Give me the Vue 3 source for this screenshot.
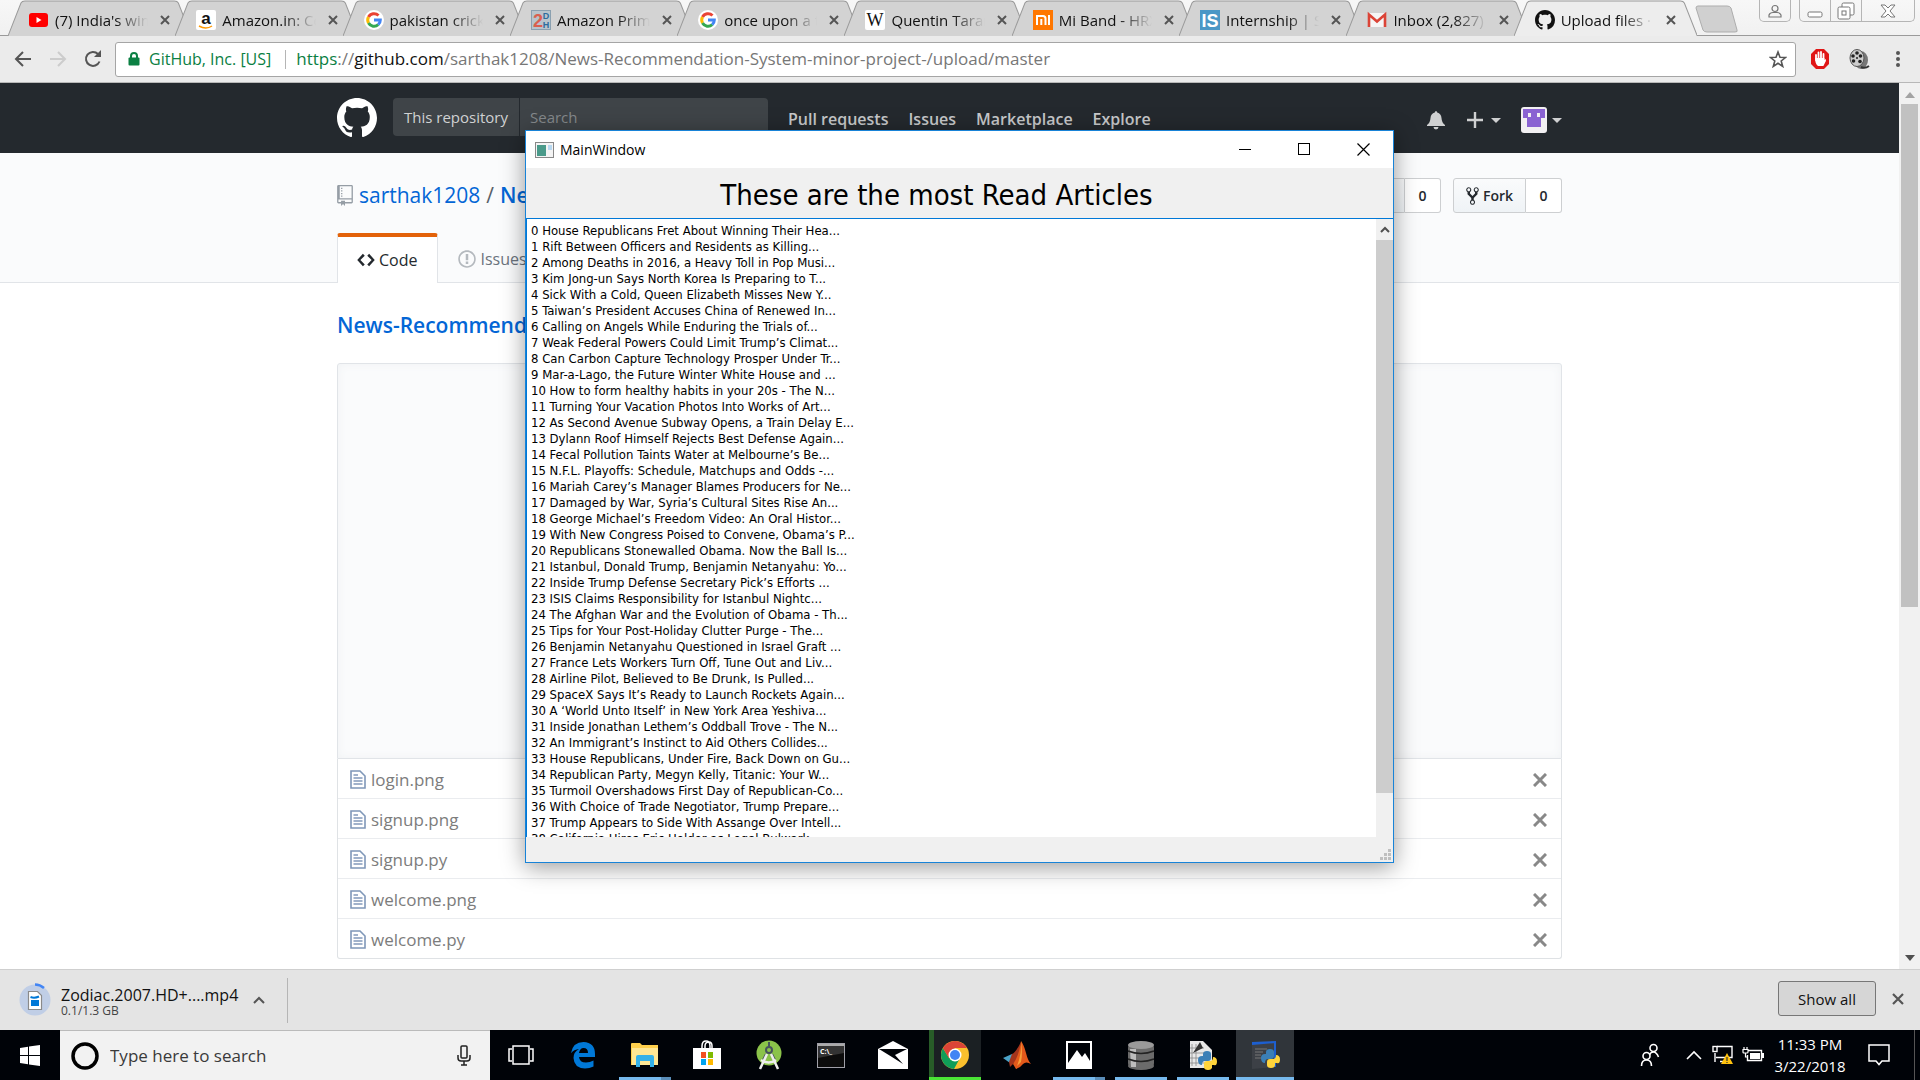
<script setup>
const tabs = [
  { icon: 'youtube', title: "(7) India's wins" },
  { icon: 'amazon', title: 'Amazon.in: Co' },
  { icon: 'google', title: 'pakistan cricke' },
  { icon: 'twodh', title: 'Amazon Prime' },
  { icon: 'google', title: 'once upon a t' },
  { icon: 'wiki', title: 'Quentin Taran' },
  { icon: 'mi', title: 'Mi Band - HRX' },
  { icon: 'is', title: 'Internship | Su' },
  { icon: 'gmail', title: 'Inbox (2,827) -' },
  { icon: 'github', title: 'Upload files · s', active: true },
]
const navLinks = ['Pull requests', 'Issues', 'Marketplace', 'Explore']
const files = ['login.png', 'signup.png', 'signup.py', 'welcome.png', 'welcome.py']
const articles = [
  'House Republicans Fret About Winning Their Hea...',
  'Rift Between Officers and Residents as Killing...',
  'Among Deaths in 2016, a Heavy Toll in Pop Musi...',
  'Kim Jong-un Says North Korea Is Preparing to T...',
  'Sick With a Cold, Queen Elizabeth Misses New Y...',
  'Taiwan’s President Accuses China of Renewed In...',
  'Calling on Angels While Enduring the Trials of...',
  'Weak Federal Powers Could Limit Trump’s Climat...',
  'Can Carbon Capture Technology Prosper Under Tr...',
  'Mar-a-Lago, the Future Winter White House and ...',
  'How to form healthy habits in your 20s - The N...',
  'Turning Your Vacation Photos Into Works of Art...',
  'As Second Avenue Subway Opens, a Train Delay E...',
  'Dylann Roof Himself Rejects Best Defense Again...',
  'Fecal Pollution Taints Water at Melbourne’s Be...',
  'N.F.L. Playoffs: Schedule, Matchups and Odds -...',
  'Mariah Carey’s Manager Blames Producers for Ne...',
  'Damaged by War, Syria’s Cultural Sites Rise An...',
  'George Michael’s Freedom Video: An Oral Histor...',
  'With New Congress Poised to Convene, Obama’s P...',
  'Republicans Stonewalled Obama. Now the Ball Is...',
  'Istanbul, Donald Trump, Benjamin Netanyahu: Yo...',
  'Inside Trump Defense Secretary Pick’s Efforts ...',
  'ISIS Claims Responsibility for Istanbul Nightc...',
  'The Afghan War and the Evolution of Obama - Th...',
  'Tips for Your Post-Holiday Clutter Purge - The...',
  'Benjamin Netanyahu Questioned in Israel Graft ...',
  'France Lets Workers Turn Off, Tune Out and Liv...',
  'Airline Pilot, Believed to Be Drunk, Is Pulled...',
  'SpaceX Says It’s Ready to Launch Rockets Again...',
  'A ‘World Unto Itself’ in New York Area Yeshiva...',
  'Inside Jonathan Lethem’s Oddball Trove - The N...',
  'An Immigrant’s Instinct to Aid Others Collides...',
  'House Republicans, Under Fire, Back Down on Gu...',
  'Republican Party, Megyn Kelly, Titanic: Your W...',
  'Turmoil Overshadows First Day of Republican-Co...',
  'With Choice of Trade Negotiator, Trump Prepare...',
  'Trump Appears to Side With Assange Over Intell...',
  'California Hires Eric Holder as Legal Bulwark ...',
]
const apps = [
  { id: 'taskview', label: 'Task View' },
  { id: 'edge', label: 'Microsoft Edge' },
  { id: 'explorer', label: 'File Explorer', open: true, stacked: true },
  { id: 'store', label: 'Store' },
  { id: 'android', label: 'Android Studio' },
  { id: 'cmd', label: 'Command Prompt' },
  { id: 'mail', label: 'Mail' },
  { id: 'chrome', label: 'Google Chrome', open: true },
  { id: 'matlab', label: 'MATLAB' },
  { id: 'photos', label: 'Photos', open: true, stacked: true },
  { id: 'db', label: 'Database', open: true },
  { id: 'idle', label: 'Python IDLE', open: true },
  { id: 'python', label: 'Python', open: true },
]
const octocat =
  'M8 0C3.58 0 0 3.58 0 8c0 3.54 2.29 6.53 5.47 7.59.4.07.55-.17.55-.38 0-.19-.01-.82-.01-1.49-2.01.37-2.53-.49-2.69-.94-.09-.23-.48-.94-.82-1.13-.28-.15-.68-.52-.01-.53.63-.01 1.08.58 1.23.82.72 1.21 1.87.87 2.33.66.07-.52.28-.87.51-1.07-1.78-.2-3.64-.89-3.64-3.95 0-.87.31-1.59.82-2.15-.08-.2-.36-1.02.08-2.12 0 0 .67-.21 2.2.82.64-.18 1.32-.27 2-.27.68 0 1.36.09 2 .27 1.53-1.04 2.2-.82 2.2-.82.44 1.1.16 1.92.08 2.12.51.56.82 1.27.82 2.15 0 3.07-1.87 3.75-3.65 3.95.29.25.54.73.54 1.48 0 1.07-.01 1.93-.01 2.2 0 .21.15.46.55.38A8.013 8.013 0 0016 8c0-4.42-3.58-8-8-8z'
</script>

<template>
  <div class="desktop">
    <header class="tabstrip">
      <div class="tabs">
        <div v-for="(tab, i) in tabs" :key="i" class="tab" :class="{ active: tab.active }">
          <svg class="tab-shape" viewBox="0 0 184 36" preserveAspectRatio="none" aria-hidden="true">
            <path d="M0 36L13 3Q14 1 17 1H167Q170 1 171 3L184 36" vector-effect="non-scaling-stroke" />
          </svg>
          <svg class="favicon" viewBox="0 0 20 20" aria-hidden="true">
            <g v-if="tab.icon === 'youtube'">
              <rect x="0" y="3" width="19" height="14" rx="3" fill="#f00" />
              <path d="M7.500 7v6l5-3z" fill="#fff" />
            </g>
            <g v-else-if="tab.icon === 'amazon'">
              <rect width="20" height="20" rx="2" fill="#fff" />
              <text x="10" y="14" text-anchor="middle" font-size="17" font-weight="700" fill="#111">a</text>
              <path d="M3 16q7 4 13 0" fill="none" stroke="#f90" stroke-width="1.500" />
            </g>
            <g v-else-if="tab.icon === 'google'">
              <circle cx="10" cy="10" r="10" fill="#fff" />
              <g fill="none" stroke-width="3">
                <path d="M14.500 5.500A6.300 6.300 0 0 0 4.500 7" stroke="#ea4335" />
                <path d="M4.500 7A6.300 6.300 0 0 0 4.500 13" stroke="#fbbc05" />
                <path d="M4.500 13A6.300 6.300 0 0 0 14.200 14.700" stroke="#34a853" />
                <path d="M14.200 14.700A6.300 6.300 0 0 0 16.300 10H10" stroke="#4285f4" />
              </g>
            </g>
            <g v-else-if="tab.icon === 'twodh'">
              <rect x=".5" y=".5" width="19" height="19" fill="#b9c4cc" stroke="#8aa0b0" />
              <text x="7" y="17" text-anchor="middle" font-size="18" font-weight="700" fill="#d9604f">2</text>
              <text x="15" y="9" text-anchor="middle" font-size="9" font-weight="700" fill="#2f6c9c">D</text>
              <text x="15" y="18" text-anchor="middle" font-size="9" font-weight="700" fill="#2f6c9c">H</text>
            </g>
            <g v-else-if="tab.icon === 'wiki'">
              <rect width="20" height="20" rx="2" fill="#fff" />
              <text class="serif" x="10" y="16" text-anchor="middle" font-size="18" fill="#111">W</text>
            </g>
            <g v-else-if="tab.icon === 'mi'">
              <rect width="20" height="20" fill="#f70" />
              <path d="M4 15V6h6q2.500 0 2.500 2.500V15M8.300 9v6M16 5v10" fill="none" stroke="#fff" stroke-width="2" />
            </g>
            <g v-else-if="tab.icon === 'is'">
              <rect width="20" height="20" fill="#4a97c6" />
              <text x="10" y="17" text-anchor="middle" font-size="18" font-weight="700" fill="#fff">IS</text>
            </g>
            <g v-else-if="tab.icon === 'gmail'">
              <rect x="1" y="3" width="18" height="14" rx="1" fill="#f6f6f6" />
              <path d="M2 17V4.500l8 7 8-7V17" fill="none" stroke="#db4437" stroke-width="2.600" />
            </g>
            <g v-else>
              <path :d="octocat" transform="scale(1.25)" fill="#111" />
            </g>
          </svg>
          <span class="tab-title">{{ tab.title }}</span>
          <button class="tab-close" aria-label="Close tab">
            <svg width="10" height="10" viewBox="0 0 10 10"><path d="M1 1l8 8M9 1L1 9" stroke="#555" stroke-width="2" /></svg>
          </button>
        </div>
      </div>
      <button class="newtab" aria-label="New tab">
        <svg width="44" height="28" viewBox="0 0 44 28"><path d="M3 1H32Q35 1 36 3L42 25Q43 27 40 27H12Q9 27 8 25L1 3Q1 1 3 1Z" fill="#d0d0d0" stroke="#adadad" /></svg>
      </button>
      <button class="profile" aria-label="Profile">
        <svg width="14" height="14" viewBox="0 0 14 14"><g fill="none" stroke="#777" stroke-width="1.200"><circle cx="7" cy="4.500" r="3" /><path d="M1 13V11Q2 8.500 5 8.500H9Q12 8.500 13 11V13Z" /></g></svg>
      </button>
      <div class="wincontrols">
        <button aria-label="Minimize"><svg width="16" height="14" viewBox="0 0 16 14"><rect x="1" y="8" width="14" height="5" rx="1.500" fill="#fff" stroke="#777" /></svg></button>
        <button aria-label="Restore"><svg width="18" height="18" viewBox="0 0 18 18"><g fill="#fff" stroke="#777"><rect x="5" y="1" width="12" height="12" rx="1.500" /><rect x="1" y="5" width="12" height="12" rx="1.500" /><rect x="5" y="9" width="4" height="4" /></g></svg></button>
        <button class="wide" aria-label="Close"><svg width="16" height="14" viewBox="0 0 16 14"><path d="M1 1h4l3 3 3-3h4l-5 6 5 6h-4l-3-3-3 3H1l5-6z" fill="#fff" stroke="#777" /></svg></button>
      </div>
    </header>

    <nav class="toolbar">
      <button aria-label="Back"><svg width="18" height="16" viewBox="0 0 18 16"><path d="M17 8H2M9 1L2 8l7 7" fill="none" stroke="#555" stroke-width="2" /></svg></button>
      <button aria-label="Forward"><svg width="18" height="16" viewBox="0 0 18 16"><path d="M1 8h15M9 1l7 7-7 7" fill="none" stroke="#ccc" stroke-width="2" /></svg></button>
      <button aria-label="Reload"><svg width="18" height="18" viewBox="0 0 18 18"><path d="M15.500 11.500A7 7 0 1 1 14 4" fill="none" stroke="#555" stroke-width="2" /><path d="M17 0v7h-7z" fill="#555" /></svg></button>
      <div class="omnibox">
        <svg width="12" height="14" viewBox="0 0 12 14" aria-hidden="true"><path d="M3 6V4a3 3 0 0 1 6 0v2" fill="none" stroke="#0b8043" stroke-width="2" /><rect x="0.500" y="5.500" width="11" height="8" rx="1" fill="#0b8043" /></svg>
        <span class="cert">GitHub, Inc. [US]</span>
        <span class="url"><span class="secure">https</span>://<b>github.com</b>/sarthak1208/News-Recommendation-System-minor-project-/upload/master</span>
        <button class="star" aria-label="Bookmark"><svg width="18" height="18" viewBox="0 0 18 18"><path d="M9 2l2 5.200 5.500.3-4.300 3.500 1.500 5.400L9 13.300l-4.700 3.100L5.800 11 1.500 7.500 7 7.200z" fill="none" stroke="#555" stroke-width="1.600" /></svg></button>
      </div>
      <button aria-label="AdBlock"><svg width="20" height="20" viewBox="0 0 20 20"><path d="M6 0h8l5 5v10l-5 5H6l-5-5V5z" fill="#e01616" /><path d="M6 11V6M8.500 10V3.500M11 10V3M13.500 11V5" stroke="#fff" stroke-width="1.800" stroke-linecap="round" /><path d="M5.200 9h9.200v2l1.500-1v2l-2.500 5H8q-3-2-2.800-8z" fill="#fff" /></svg></button>
      <button aria-label="Film extension"><svg width="24" height="20" viewBox="-1 0 24 20"><ellipse cx="13" cy="11" rx="7" ry="9" fill="#777" /><path d="M13 18q4 2 8-1" stroke="#333" stroke-width="2" fill="none" /><ellipse cx="9" cy="9" rx="7" ry="8.500" fill="#ccc" stroke="#555" /><g fill="#222"><circle cx="9" cy="4" r="1.800" /><circle cx="5" cy="7" r="1.800" /><circle cx="12.500" cy="7" r="1.800" /><circle cx="5.500" cy="12" r="1.800" /><circle cx="12" cy="12.500" r="1.800" /><circle cx="9" cy="9" r="1" /></g></svg></button>
      <button class="menu" aria-label="Menu"><svg width="4" height="18" viewBox="0 0 4 18"><g fill="#555"><circle cx="2" cy="3" r="2" /><circle cx="2" cy="9" r="2" /><circle cx="2" cy="15" r="2" /></g></svg></button>
    </nav>

    <div class="viewport">
      <div class="page">
        <header class="gh-header">
          <div class="container gh-bar">
            <svg class="gh-logo" viewBox="0 0 16 16" aria-label="GitHub"><path :d="octocat" fill="#fff" /></svg>
            <form class="gh-search">
              <label for="q">This repository</label>
              <input id="q" type="text" placeholder="Search" />
            </form>
            <nav class="gh-nav"><a v-for="l in navLinks" :key="l" href="#">{{ l }}</a></nav>
            <div class="gh-user">
              <svg width="18" height="20" viewBox="0 0 18 20"><path d="M9 1q1 0 1.200 1.500 4 1 4.300 5.500.3 5 3.500 7v1H0v-1q3.200-2 3.500-7Q3.800 3.500 7.800 2.500 8 1 9 1zM6.500 17h5a2.500 2.500 0 0 1-5 0z" fill="#cfd0d1" /></svg>
              <span class="drop"><svg width="16" height="16" viewBox="0 0 16 16"><path d="M8 0v16M0 8h16" stroke="#cfd0d1" stroke-width="2.400" /></svg><i class="caret"></i></span>
              <span class="drop near"><svg width="26" height="26" viewBox="0 0 26 26"><rect width="26" height="26" rx="3" fill="#f2f0f2" /><path d="M2 2h22v9h-4v9H6v-9H2z" fill="#8a63d2" /><path d="M7 6h3v4H7zM16 6h3v4h-3z" fill="#f2f0f2" /></svg><i class="caret"></i></span>
            </div>
          </div>
        </header>
        <section class="pagehead">
          <div class="container">
            <div class="repo-row">
              <h1>
                <svg width="16" height="21" viewBox="0 0 12 16"><path fill="#959da5" d="M4 9H3V8h1v1zm0-3H3v1h1V6zm0-2H3v1h1V4zm0-2H3v1h1V2zm8-1v12c0 .55-.45 1-1 1H6v2l-1.500-1.500L3 16v-2H1c-.55 0-1-.45-1-1V1c0-.55.45-1 1-1h10c.55 0 1 .45 1 1zm-1 10H1v2h2v-1h3v1h5v-2zm0-10H2v9h9V1z" /></svg>
                <a href="#">sarthak1208</a><span>/</span><a href="#" class="strong">News-Recommendation-System</a>
              </h1>
              <div class="actions">
                <span class="social"><button>Star</button><a href="#">0</a></span>
                <span class="social">
                  <button><svg width="13" height="20" viewBox="0 0 10 16"><path fill="#24292e" d="M8 1a1.993 1.993 0 0 0-1 3.720V6L5 8 3 6V4.720A1.993 1.993 0 0 0 2 1a1.993 1.993 0 0 0-1 3.720V6.500l3 3v1.780A1.993 1.993 0 0 0 5 15a1.993 1.993 0 0 0 1-3.720V9.500l3-3V4.720A1.993 1.993 0 0 0 8 1zM2 4.200C1.340 4.200.8 3.650.8 3c0-.65.55-1.200 1.200-1.200.65 0 1.200.55 1.200 1.200 0 .65-.55 1.200-1.200 1.200zm3 10c-.66 0-1.200-.55-1.200-1.200 0-.65.55-1.200 1.200-1.200.65 0 1.200.55 1.200 1.200 0 .65-.55 1.200-1.200 1.200zm3-10c-.66 0-1.200-.55-1.200-1.200 0-.65.55-1.200 1.200-1.200.65 0 1.200.55 1.200 1.200 0 .65-.55 1.200-1.200 1.200z" /></svg>Fork</button><a href="#">0</a>
                </span>
              </div>
            </div>
            <nav class="repo-tabs">
              <a href="#" class="selected"><svg width="18" height="20" viewBox="0 0 14 16"><path fill="#24292e" d="M9.500 3L8 4.500 11.500 8 8 11.500 9.500 13 14 8 9.500 3zm-5 0L0 8l4.500 5L6 11.500 2.500 8 6 4.500 4.500 3z" /></svg>Code</a>
              <a href="#"><svg width="18" height="20" viewBox="0 0 14 16"><path fill="#b4b9be" d="M7 2.300c3.140 0 5.700 2.560 5.700 5.700s-2.560 5.700-5.700 5.700A5.710 5.710 0 0 1 1.300 8c0-3.140 2.560-5.700 5.700-5.700zM7 1C3.140 1 0 4.140 0 8s3.140 7 7 7 7-3.140 7-7-3.140-7-7-7zm1 3H6v5h2V4zm0 6H6v2h2v-2z" /></svg>Issues</a>
            </nav>
          </div>
        </section>
        <main class="container upload">
          <h2><a href="#">News-Recommendation-System</a></h2>
          <div class="dropzone"></div>
          <ul class="files">
            <li v-for="f in files" :key="f">
              <svg width="16" height="19" viewBox="0 0 16 19"><path d="M1 1h9l5 5v12H1z" fill="#fff" stroke="#7f97b8" stroke-width="1.600" /><path d="M3.500 5H8M3.500 8h9M3.500 11h9M3.500 14h9" stroke="#8299ba" stroke-width="1.300" /></svg>
              <span>{{ f }}</span>
              <button :aria-label="'Remove ' + f"><svg width="14" height="14" viewBox="0 0 14 14"><path d="M1 1l12 12M13 1L1 13" stroke="#888" stroke-width="3" /></svg></button>
            </li>
          </ul>
        </main>
      </div>
      <div class="scrollbar">
        <svg width="10" height="6" viewBox="0 0 10 6"><path d="M0 6l5-6 5 6z" fill="#a3a3a3" /></svg>
        <div class="thumb"></div>
        <svg class="down" width="10" height="6" viewBox="0 0 10 6"><path d="M0 0h10L5 6z" fill="#505050" /></svg>
      </div>
    </div>

    <footer class="downloads">
      <svg width="32" height="36" viewBox="0 0 32 36" aria-hidden="true">
        <circle cx="16" cy="18" r="15.500" fill="#c0cee6" /><path d="M16 2.500q5 0 9 3.500" fill="none" stroke="#4285f4" stroke-width="2.500" />
        <path d="M9.500 9.500h9l4 4v14h-13z" fill="#fff" stroke="#8a8a8a" stroke-width="1.200" /><rect x="12" y="18" width="8" height="6" fill="#0078d7" /><path d="M11.500 15q4 1.500 8.500-.5" stroke="#0078d7" stroke-width="2" fill="none" />
      </svg>
      <div class="dl-text"><span>Zodiac.2007.HD+....mp4</span><small>0.1/1.3 GB</small></div>
      <button class="dl-menu" aria-label="Options"><svg width="12" height="8" viewBox="0 0 12 8"><path d="M1 7l5-5 5 5" fill="none" stroke="#555" stroke-width="2" /></svg></button>
      <i class="dl-sep"></i>
      <button class="showall">Show all</button>
      <button class="dl-close" aria-label="Close"><svg width="12" height="12" viewBox="0 0 12 12"><path d="M1 1l10 10M11 1L1 11" stroke="#555" stroke-width="2.200" /></svg></button>
    </footer>

    <footer class="taskbar">
      <button class="start" aria-label="Start"><svg width="20" height="21" viewBox="0 0 20 21"><path d="M0 3l8-1.200V10H0zM9 1.600L20 0v10H9zM0 11h8v8.200L0 18zM9 11h11v10L9 19.400z" fill="#fff" /></svg></button>
      <div class="cortana">
        <svg width="28" height="28" viewBox="0 0 28 28" aria-hidden="true"><circle cx="14" cy="14" r="12" fill="none" stroke="#000" stroke-width="3.500" /></svg>
        <input type="text" placeholder="Type here to search" aria-label="Type here to search" />
        <svg width="14" height="21" viewBox="0 0 14 21" aria-hidden="true"><g fill="none" stroke="#222" stroke-width="1.500"><rect x="4" y="1" width="6" height="12" rx="1" /><path d="M1 10v3q0 3 3 3h6q3 0 3-3v-3M7 16v4M4 20h6" /></g></svg>
      </div>
      <div class="apps">
        <button v-for="a in apps" :key="a.id" :class="[a.id, { open: a.open, stacked: a.stacked }]" :aria-label="a.label">
          <svg width="30" height="30" viewBox="0 0 30 30">
            <g v-if="a.id === 'taskview'" fill="none" stroke="#fff" stroke-width="1.500"><rect x="7" y="6" width="16" height="18" /><path d="M6 9H3v12h3M24 9h3v12h-3" /></g>
            <path v-else-if="a.id === 'edge'" fill="#0078d7" d="M3 13Q5 2 15.500 2 27 2.500 27 14v3H11q.5 5.500 7 5.500 4 0 7.500-2v6q-4 2-8.500 2Q6 28 5.500 18 5.500 12 11 9q-5 .5-8 4zm8 0h9q0-5-4.500-5-3.500 0-4.500 5z" />
            <g v-else-if="a.id === 'explorer'"><path d="M1 4q0-1 1-1h8l2 2h16v20H1z" fill="#ffd04c" /><path d="M2 8h26v17H2z" fill="#ffe794" /><path d="M6 17q0-2 2-2h14q2 0 2 2v10h-4v-6H10v6H6z" fill="#35b1e8" /></g>
            <g v-else-if="a.id === 'store'"><path d="M10 9V6q0-5 4-5t4 5v3M13 8V6q0-4 4-4 3 0 3 4v2" fill="none" stroke="#fff" stroke-width="1.500" /><path d="M1 8h28v21H1z" fill="#fff" /><path d="M9 12h5v6H9z" fill="#f25022" /><path d="M16 12h5v6h-5z" fill="#7fba00" /><path d="M9 19h5v6H9z" fill="#00a4ef" /><path d="M16 19h5v6h-5z" fill="#ffb900" /></g>
            <g v-else-if="a.id === 'android'"><circle cx="15" cy="13" r="12.500" fill="#8bc34a" /><circle cx="15" cy="10" r="3" fill="none" stroke="#46535c" stroke-width="2" /><path d="M15 2v5M12 14l-3 6M18 14l3 6" stroke="#46535c" stroke-width="2" /><path d="M13 14L6 29M17 14l7 15M7 20q8 5 15 0" fill="none" stroke="#eee" stroke-width="2.500" /></g>
            <g v-else-if="a.id === 'cmd'"><rect x="1.500" y="3.500" width="27" height="24" fill="#0c0c0c" stroke="#a0a0a8" /><path d="M2 4h26v2H2z" fill="#aaa" /><path d="M2 6h26v7L2 18z" fill="#333" /><text x="4" y="14" font-size="7" font-weight="700" fill="#fff">C:\_</text></g>
            <g v-else-if="a.id === 'mail'"><path d="M0 9l15-8 15 8v20H0z" fill="#fff" /><path d="M1 9h28l-12 6 8 9-11-7z" fill="#000308" /></g>
            <g v-else-if="a.id === 'chrome'"><circle cx="15" cy="15" r="14" fill="#fbc02d" /><path d="M2.900 8A14 14 0 0 0 14 29l6-11-5-3-6 3z" fill="#0f9d58" /><path d="M15 8h12.100A14 14 0 0 0 2.900 8l6 10z" fill="#db4437" /><circle cx="15" cy="15" r="6.500" fill="#fff" /><circle cx="15" cy="15" r="5" fill="#4285f4" /></g>
            <g v-else-if="a.id === 'matlab'"><path d="M1 18l9-4 4 4-6 5z" fill="#4aa3c8" /><path d="M10 14q4-2 9-12l-2 16-9 9-1-5z" fill="#a3341c" /><path d="M19 1q3 4 5 12 2 8 5 11-5-3-8 0-3 4-7 5l-3-5q6-8 8-23z" fill="#e2591b" /><path d="M19 1q1 12-4 25l4-4q2-10 0-21z" fill="#f5a03a" /></g>
            <g v-else-if="a.id === 'photos'"><path d="M2 1h26v28H2z" fill="#fff" /><path d="M4 3h22v18l-5-8-3 4-5-7-9 13z" fill="#000308" /></g>
            <g v-else-if="a.id === 'db'"><g fill="#6b6b6b"><rect x="2" y="4" width="26" height="23" rx="4" /><ellipse cx="15" cy="26" rx="13" ry="4" /></g><path d="M4 9h6v18H5z" fill="#bdbdbd" /><ellipse cx="15" cy="5" rx="13" ry="4" fill="#9a9a9a" /><path d="M2 11q13 5 26 0M2 19q13 5 26 0" fill="none" stroke="#222" stroke-width="1.500" /></g>
            <g v-else>
              <g v-if="a.id === 'idle'"><path d="M2 1h13l9 9v18H2z" fill="#e8e8e8" /><path d="M4 4v22M8 4v22M2 8h14M2 13h20M2 18h20M2 23h20" stroke="#888" stroke-width=".8" /><path d="M12 2L5 13l10-5z" fill="#333" /></g>
              <g v-else><path d="M2 2l24-1v26L2 29z" fill="#3c4046" /><path d="M2 2l24-1v2L2 5z" fill="#1d5fd0" /><path d="M24 2l2-1v26h-2z" fill="#1d5fd0" /><path d="M5 9h12M5 12h8M5 15h6M5 18h7" stroke="#777" /></g>
              <g :transform="a.id === 'idle' ? 'translate(10 11)' : 'translate(11 9)'">
                <path d="M5 5V3q0-3 4-3t4 3v4q0 3-3 3H7q-3 0-3 4-4 0-4-5 0-4 4-4z" fill="#3b7fb6" /><path d="M14 14v2q0 3-4 3t-4-3v-3q0-3 3-3h3q3 0 3-4 4 0 4 4.500T16 14z" fill="#ffd43b" />
              </g>
            </g>
          </svg>
        </button>
      </div>
      <div class="tray">
        <svg width="20" height="24" viewBox="0 0 20 24"><g fill="none" stroke="#fff" stroke-width="1.600"><circle cx="13.500" cy="5" r="3.500" /><path d="M9.500 12q1-3 4-3t5 5" /><circle cx="6.500" cy="13" r="3.500" /><path d="M1.500 23q0-6 5-6t5 6" /></g></svg>
        <svg class="chev" width="16" height="10" viewBox="0 0 16 10"><path d="M1 9l7-7 7 7" fill="none" stroke="#fff" stroke-width="1.600" /></svg>
        <svg width="22" height="20" viewBox="0 0 22 20"><g fill="none" stroke="#fff" stroke-width="1.400"><path d="M5 1.500h15v11H4M8 16.500h6M3 8v9" /><rect x="1" y="1.500" width="4" height="5" /></g><path d="M15 8l6 11H9z" fill="#ffc20e" /><path d="M15 12v4M15 17v1" stroke="#333" stroke-width="1.200" /></svg>
        <svg width="22" height="18" viewBox="0 0 22 18"><path d="M6 4.500h13.500v10H5.500V9" fill="none" stroke="#fff" stroke-width="1.400" /><path d="M8 7h10v6H8z" fill="#fff" /><path d="M20 7h2v5h-2z" fill="#fff" /><path d="M1 3.500h5v2.500q0 1-1 1H2q-1 0-1-1zM2 1v2M5 1v2M3.500 7v4h2" fill="none" stroke="#fff" stroke-width="1.200" /></svg>
        <div class="clock"><span>11:33 PM</span><span>3/22/2018</span></div>
        <svg width="22" height="22" viewBox="0 0 22 22"><path d="M1 1h20v16h-7l-3 3.500L8 17H1z" fill="none" stroke="#fff" stroke-width="1.500" /></svg>
      </div>
    </footer>

    <section class="dialog" aria-label="MainWindow">
      <header class="titlebar">
        <svg width="19" height="16" viewBox="0 0 19 16" aria-hidden="true"><rect x=".5" y=".5" width="18" height="15" fill="#f4f4f4" stroke="#888" /><path d="M2 3h9v11H2z" fill="#4a9a8a" /><path d="M13 3h4v5h-4z" fill="#b8d8f0" /></svg>
        <span>MainWindow</span>
        <button aria-label="Minimize"><svg width="13" height="13" viewBox="0 0 13 13"><path d="M0 6.500h12" stroke="#000" /></svg></button>
        <button aria-label="Maximize"><svg width="13" height="13" viewBox="0 0 13 13"><rect x=".5" y=".5" width="11" height="11" fill="none" stroke="#000" /></svg></button>
        <button aria-label="Close"><svg width="13" height="13" viewBox="0 0 13 13"><path d="M.5.5l12 12M12.500.5l-12 12" stroke="#000" stroke-width="1.200" /></svg></button>
      </header>
      <h2>These are the most Read Articles</h2>
      <div class="listbox">
        <ul><li v-for="(a, i) in articles" :key="i">{{ i }} {{ a }}</li></ul>
        <div class="listscroll">
          <svg width="10" height="7" viewBox="0 0 10 7"><path d="M1 6l4-4 4 4" fill="none" stroke="#505050" stroke-width="2" /></svg>
          <div class="listthumb"></div>
        </div>
      </div>
      <div class="statusbar"><svg width="11" height="11" viewBox="0 0 11 11"><path fill="#bfbfbf" d="M8 0h3v3H8zM4 4h3v3H4zM8 4h3v3H8zM0 8h3v3H0zM4 8h3v3H4zM8 8h3v3H8z" /></svg></div>
    </section>
  </div>
</template>

<style>
body { margin: 0; background: #fff; }
</style>

<style scoped>
* { box-sizing: border-box; }
.desktop { position: relative; display: flex; flex-direction: column; height: 100vh; overflow: hidden; font-family: "Open Sans", "Noto Sans", sans-serif; font-size: 16px; color: #24292e; }
button { border: 0; background: none; padding: 0; margin: 0; font: inherit; color: inherit; display: flex; align-items: center; justify-content: center; }
a { text-decoration: none; color: #0366d6; }
h1, h2, ul { margin: 0; padding: 0; font-weight: 400; }
svg { display: block; flex: none; }

.tabstrip { display: flex; flex: none; height: 36px; padding: 0 5px 0 8px; background: linear-gradient(#f7f7f7, #f1f1f1); border-bottom: 1px solid #9a9a9a; }
.tabs { display: flex; flex: 1; min-width: 0; margin-right: 14px; }
.tab { position: relative; display: flex; align-items: center; flex: 1 1 0; min-width: 0; height: 36px; padding: 3px 0 0 21px; font-size: 15px; color: #111; }
.tab.active { z-index: 1; }
.tab-shape { position: absolute; left: 0; top: 0; width: calc(100% + 16px); height: 36px; }
.tab-shape path { fill: #d3d3d3; stroke: #9a9a9a; stroke-width: 1px; }
.tab.active .tab-shape path { fill: #ededed; }
.favicon { position: relative; width: 20px; height: 20px; font-family: "Liberation Sans", sans-serif; }
.serif { font-family: "Liberation Serif", serif; }
.tab-title { position: relative; flex: 1; min-width: 0; margin-left: 6px; white-space: nowrap; overflow: hidden; line-height: 24px; mask-image: linear-gradient(90deg, #000 65%, transparent 100%); }
.tab-close { position: relative; width: 10px; margin: 0 5px 0 12px; }
.newtab { width: 44px; height: 36px; padding-top: 2px; }
.profile { width: 32px; height: 22px; margin: 0 8px 0 20px; border: 1px solid #b5b5b5; border-top: 0; border-radius: 0 0 5px 5px; }
.wincontrols { display: flex; height: 22px; border: 1px solid #b5b5b5; border-top: 0; border-radius: 0 0 5px 5px; }
.wincontrols button { width: 31px; border-right: 1px solid #b5b5b5; }
.wincontrols .wide { width: 52px; border: 0; }

.toolbar { display: flex; flex: none; align-items: center; height: 47px; padding: 0 20px 0 14px; gap: 17px; background: #ebebeb; border-bottom: 1px solid #b8b8b8; }
.menu { padding-left: 8px; }
.omnibox { display: flex; flex: 1; align-items: center; height: 35px; margin: 0 -3px 0 -4px; padding: 0 8px 0 12px; background: #fff; border: 1px solid #a5a5a5; border-radius: 3px; line-height: 24px; white-space: nowrap; font-size: 17px; }
.cert { margin-left: 9px; padding-right: 14px; border-right: 1px solid #b5b5b5; color: #0b8043; line-height: 19px; font-size: 16px; }
.url { flex: 1; margin-left: 10px; color: #777; }
.url b { font-weight: 400; color: #111; }
.secure { color: #0b8043; }

.viewport { display: flex; flex: 1; min-height: 0; overflow: hidden; }
.page { flex: 1; min-width: 0; overflow: hidden; background: #fff; }
.container { width: 100%; max-width: 1225px; margin: 0 auto; }
.gh-header { background: #24292e; height: 70px; padding-top: 15px; }
.gh-bar { display: flex; align-items: center; height: 40px; }
.gh-logo { width: 40px; height: 40px; }
.gh-search { display: flex; align-items: center; height: 38px; width: 375px; margin: 0 0 2px 16px; background: #3f4448; border-radius: 4px; font-size: 15px; color: #ccc; }
.gh-search label { width: 127px; height: 38px; line-height: 38px; text-align: center; border-right: 1px solid #24292e; color: #d0d1d2; white-space: nowrap; }
.gh-search input { flex: 1; min-width: 0; padding: 0 10px; border: 0; background: none; font: inherit; outline: 0; }
.gh-search input::placeholder { color: #85898c; opacity: 1; }
.gh-nav { display: flex; gap: 20px; margin-left: 20px; padding-top: 2px; font-size: 16px; font-weight: 600; white-space: nowrap; }
.gh-nav a { color: #c8c9cb; }
.gh-user { display: flex; align-items: center; gap: 22px; margin-left: auto; padding-top: 4px; }
.drop { display: flex; align-items: center; gap: 8px; }
.drop.near { gap: 5px; margin-left: -2px; }
.caret { border: 5px solid transparent; border-top-color: #cfd0d1; border-bottom: 0; }

.pagehead { background: #fafbfc; border-bottom: 1px solid #e1e4e8; height: 130px; padding-top: 25px; }
.repo-row { display: flex; justify-content: space-between; height: 36px; }
h1 { display: flex; align-items: center; height: 34px; font-size: 21px; white-space: nowrap; color: #586069; }
h1 a:first-of-type { margin-left: 6px; }
h1 span { margin: 0 6px; }
.strong { font-weight: 600; }
.actions { display: flex; gap: 12px; font-size: 14px; font-weight: 600; }
.social { display: flex; height: 35px; }
.social button { gap: 4px; padding: 0 12px; border: 1px solid #cdcfd1; border-radius: 3px 0 0 3px; background: linear-gradient(#fafbfc, #eff3f6); }
.social a { width: 36px; line-height: 33px; text-align: center; color: #24292e; background: #fff; border: 1px solid #cdcfd1; border-left: 0; border-radius: 0 3px 3px 0; }
.repo-tabs { display: flex; margin-top: 19px; height: 50px; color: #586069; }
.repo-tabs a { display: flex; align-items: center; gap: 4px; padding: 2px 20px 0; color: #6a737d; font-size: 16px; }
.repo-tabs .selected { color: #24292e; background: #fff; border: 1px solid #e1e4e8; border-top: 4px solid #e36209; border-bottom: 0; border-radius: 3px 3px 0 0; padding: 0 20px 0 19px; }

.upload { padding-top: 26px; }
.upload h2 { font-size: 21px; line-height: 32px; font-weight: 600; }
.dropzone { margin-top: 22px; height: 396px; background: #fafbfc; border: 1px solid #e1e4e8; border-radius: 3px 3px 0 0; box-shadow: inset 0 0 10px #f0f2f4; }
.files { list-style: none; border: 1px solid #dfe2e5; border-top: 0; border-radius: 0 0 3px 3px; }
.files li { display: flex; align-items: center; height: 40px; padding: 2px 14px 0 12px; border-bottom: 1px solid #eaecef; color: #7c7c7c; font-size: 17px; }
.files li:last-child { height: 39px; border: 0; }
.files span { flex: 1; margin-left: 5px; }

.scrollbar { display: flex; flex: none; flex-direction: column; align-items: center; width: 21px; padding: 9px 0 8px; background: #f1f1f1; }
.thumb { width: 17px; height: 503px; margin-top: 6px; background: #c1c1c1; }
.down { margin-top: auto; }

.downloads { display: flex; flex: none; align-items: center; height: 61px; padding: 0 16px 0 19px; background: #e4e4e4; border-top: 1px solid #cfcfcf; }
.dl-text { display: flex; flex-direction: column; margin-left: 10px; padding-top: 2px; font-size: 16px; line-height: 20px; color: #111; }
.dl-text small { font-size: 12px; line-height: 12px; color: #444; }
.dl-menu { margin-left: 15px; }
.dl-sep { width: 1px; height: 45px; margin-left: 22px; background: #b5b5b5; }
.showall { width: 98px; height: 35px; margin: 0 0 3px auto; border: 1px solid #777; border-radius: 3px; background: #d6d6d6; font-size: 15px; color: #111; }
.dl-close { margin: 0 0 3px 16px; }

.taskbar { display: flex; flex: none; height: 50px; background: #000308; color: #fff; }
.start { width: 60px; }
.cortana { display: flex; align-items: center; width: 430px; padding: 0 19px 0 11px; background: #f2f2f2; border-top: 1px solid #bbb; }
.cortana input { flex: 1; min-width: 0; margin-left: 11px; padding: 0; border: 0; background: none; font: inherit; font-size: 17px; outline: 0; }
.cortana input::placeholder { color: #3a3a3a; opacity: 1; }
.apps { display: flex; }
.apps button { width: 52px; margin: 0 5px; border-bottom: 3px solid transparent; padding-top: 3px; }
.apps .open { border-color: #76b9ed; }
.apps .stacked { border-image: linear-gradient(90deg, #76b9ed 78%, #5a8db8 78%) 3; border-width: 0 0 3px; border-style: solid; }
.apps .chrome { border-color: #4be536; background: linear-gradient(90deg, #285c28 5px, #1b2023 5px); }
.apps .python { width: 58px; margin: 0 2px; background: #30353a; }
.tray { display: flex; align-items: center; gap: 8px; margin-left: auto; margin-right: 5px; padding-right: 24px; border-right: 1px solid #555; }
.chev { margin: 0 2px 0 18px; }
.clock { display: flex; flex-direction: column; align-items: center; width: 72px; margin: 0 14px 0 2px; font-size: 15px; line-height: 22px; }

.dialog { position: absolute; left: 525px; top: 130px; width: 869px; height: 733px; display: flex; flex-direction: column; background: #f0f0f0; border: 1px solid #1883d7; box-shadow: 0 4px 22px rgba(0, 0, 0, .4); font-family: "DejaVu Sans Condensed", "DejaVu Sans", sans-serif; color: #000; }
.titlebar { display: flex; align-items: center; height: 37px; padding-left: 9px; background: #fff; font-family: "Open Sans", sans-serif; font-size: 14px; }
.titlebar span { flex: 1; margin-left: 6px; }
.titlebar button { width: 59px; height: 37px; }
.dialog h2 { height: 50px; line-height: 54px; padding-right: 46px; text-align: center; font-size: 29px; }
.listbox { display: flex; flex: 1; min-height: 0; border-top: 1px solid #0078d7; border-left: 1px solid #0078d7; background: #fff; }
.listbox ul { flex: 1; padding: 4px 4px 0; list-style: none; font-size: 13px; line-height: 16px; overflow: hidden; white-space: pre; }
.listscroll { display: flex; flex-direction: column; align-items: center; width: 17px; padding-top: 7px; background: #f0f0f0; }
.listthumb { width: 17px; height: 553px; margin-top: 7px; background: #cdcdcd; }
.statusbar { display: flex; justify-content: flex-end; align-items: flex-end; height: 25px; padding: 2px; }
</style>
